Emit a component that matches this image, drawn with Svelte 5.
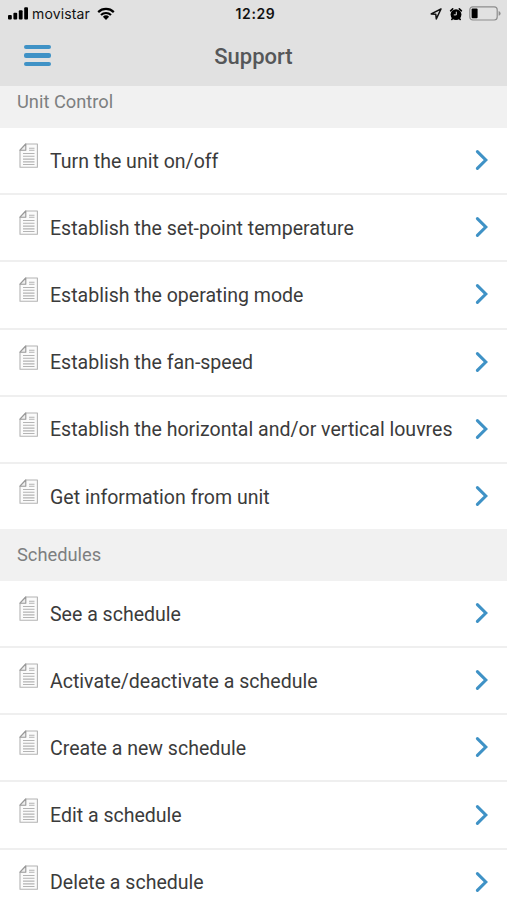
<script>
  const sections = [
    {
      title: 'Unit Control',
      items: [
        'Turn the unit on/off',
        'Establish the set-point temperature',
        'Establish the operating mode',
        'Establish the fan-speed',
        'Establish the horizontal and/or vertical louvres',
        'Get information from unit'
      ]
    },
    {
      title: 'Schedules',
      items: [
        'See a schedule',
        'Activate/deactivate a schedule',
        'Create a new schedule',
        'Edit a schedule',
        'Delete a schedule'
      ]
    }
  ];
</script>

<div class="screen">
  <header>
    <div class="status">
      <div class="carrier">
        <svg width="21" height="13" viewBox="0 0 21 13">
          <rect x="0" y="8" width="3.8" height="4.5" rx="1" />
          <rect x="5.4" y="5.8" width="3.8" height="6.7" rx="1" />
          <rect x="10.8" y="3.2" width="3.8" height="9.3" rx="1" />
          <rect x="16.2" y="0.3" width="3.8" height="12.2" rx="1" />
        </svg>
        <span class="name">movistar</span>
        <svg class="wifi" width="18" height="13" viewBox="0 0 18 13">
          <path d="M1.2 5.1a11.2 11.2 0 0 1 15.6 0M4 8a7.2 7.2 0 0 1 10 0" fill="none" stroke="#000" stroke-width="2.2" />
          <path d="M5.9 9.8a4.5 4.5 0 0 1 6.2 0L9 12.9z" />
        </svg>
      </div>
      <span class="time">12:29</span>
      <div class="indicators">
        <svg width="12" height="12" viewBox="0 0 12 12">
          <path d="M11 1 1.2 5.9l4.6.4.5 4.6z" fill="none" stroke="#111" stroke-width="1.5" stroke-linejoin="round" />
        </svg>
        <svg class="alarm" width="14" height="14" viewBox="0 0 14 14">
          <circle cx="7" cy="7.6" r="5.4" />
          <path d="M1.6 3.8 3.7 1.8M12.4 3.8 10.3 1.8M3.6 11.5l-.8 1M10.4 11.5l.8 1" stroke="#000" stroke-width="1.6" stroke-linecap="round" />
          <path d="M7.3 4.7v3.2H4.8" fill="none" stroke="#e1e1e1" stroke-width="1" />
        </svg>
        <svg class="battery" width="32" height="15" viewBox="0 0 32 15">
          <rect x="0.8" y="0.8" width="27.4" height="13.2" rx="3" fill="none" stroke="#8d8d8d" stroke-width="1.2" />
          <rect x="2.6" y="2.6" width="6" height="9.6" rx="1" />
          <path d="M29.6 5.1q2 .7 2 2.3t-2 2.3z" fill="#8d8d8d" />
        </svg>
      </div>
    </div>
    <div class="bar">
      <button class="menu" aria-label="Menu"><i></i><i></i><i></i></button>
      <h1>Support</h1>
    </div>
  </header>
  <main>
    {#each sections as section}
      <section>
        <h2>{section.title}</h2>
        <ul>
          {#each section.items as item}
            <li>
              <svg class="doc" width="20" height="26" viewBox="0 0 20 26">
                <path d="M6.8 1H18.4V24.2H1V7.2z" fill="#fbfbfb" stroke="#b4b4b4" stroke-width="1.1" stroke-linejoin="round" />
                <path d="M6.8 1V7.2H1z" fill="#eee" stroke="#999" stroke-width="1.1" stroke-linejoin="round" />
                <path d="M10 5.3h5.5M10 7.3h5.5M4 10.5h11.5M4 13.3h11.5M4 16.1h11.5M4 18.9h11.5M4 21.5h11.5" stroke="#b4b4b4" stroke-width="1.1" />
              </svg>
              <span>{item}</span>
              <svg class="chevron" width="14" height="22" viewBox="0 0 14 22">
                <path d="M2.4 2.6 10.8 11 2.4 19.4" fill="none" stroke="#3f92c6" stroke-width="3.1" stroke-linecap="round" />
              </svg>
            </li>
          {/each}
        </ul>
      </section>
    {/each}
  </main>
</div>

<style>
  .screen {
    width: 507px;
    height: 900px;
    overflow: hidden;
    display: flex;
    flex-direction: column;
    background: #fff;
    font-family: Roboto, sans-serif;
  }
  header {
    flex: none;
    height: 86px;
    background: #e1e1e1;
  }
  .status {
    height: 27px;
    display: grid;
    grid-template-columns: 1fr auto 1fr;
    align-items: center;
    padding: 0 6px 0 8px;
    box-sizing: border-box;
    font-family: Inter, sans-serif;
    color: #111;
  }
  .carrier, .indicators {
    display: flex;
    align-items: center;
  }
  .name {
    margin-left: 3px;
    font-size: 14px;
    letter-spacing: 0.15px;
  }
  .wifi {
    margin-left: 7px;
  }
  .time {
    font-size: 14px;
    font-weight: 600;
    letter-spacing: 0.6px;
    padding-left: 2px;
  }
  .indicators {
    justify-content: flex-end;
  }
  .alarm {
    margin-left: 7px;
  }
  .battery {
    margin-left: 6px;
  }
  .bar {
    height: 58px;
    display: grid;
    grid-template-columns: 1fr auto 1fr;
    align-items: center;
    padding: 0 24px;
  }
  .menu {
    width: 27px;
    padding: 0;
    border: 0;
    background: none;
    display: flex;
    flex-direction: column;
    gap: 4px;
    margin-top: -1px;
  }
  .menu i {
    width: 27px;
    height: 4.4px;
    border-radius: 2px;
    background: #3f92c6;
  }
  h1 {
    margin: 0;
    font-size: 22px;
    font-weight: 500;
    color: #555759;
  }
  main {
    flex: 1;
    min-height: 0;
    overflow: hidden;
  }
  h2 {
    margin: 0;
    height: 51.8px;
    line-height: 52px;
    padding-left: 17px;
    background: #f1f1f1;
    font-size: 18.3px;
    font-weight: 400;
    color: #7d7f80;
  }
  section:first-child h2 {
    margin-top: -9.8px;
  }
  ul {
    margin: 0;
    padding: 0;
    list-style: none;
  }
  li {
    height: 65.2px;
    display: flex;
    align-items: center;
    padding: 0 18px;
    color: #3b3b3b;
    font-size: 19.54px;
    white-space: nowrap;
    border-bottom: 2px solid #efefef;
  }
  li:last-child {
    border-bottom: 0;
  }
  li span {
    padding-top: 1px;
  }
  .doc {
    flex: none;
    margin: -9px 11.5px 0 0.5px;
  }
  .chevron {
    flex: none;
    margin: -1px 0 0 auto;
  }
</style>
